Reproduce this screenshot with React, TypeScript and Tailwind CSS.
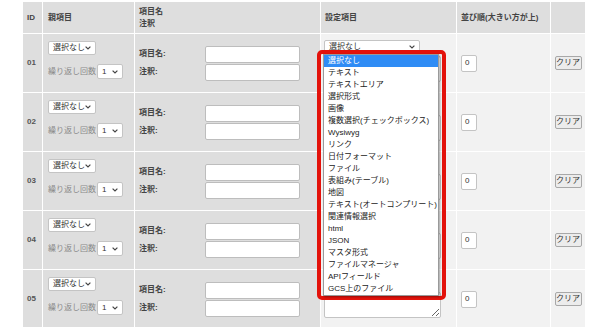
import React from "react";

function Chevron() {
  return (
    <svg width="6" height="4" viewBox="0 0 6 4" className="block">
      <path d="M0.6 0.6 L3 3 L5.4 0.6" fill="none" stroke="#444" strokeWidth="1.2" />
    </svg>
  );
}

function Sel({ w, h, text }: { w: string; h: string; text: string }) {
  return (
    <div
      className={`${w} ${h} flex items-center justify-between bg-white border border-[#c4c4c4] rounded-[2px] pl-[4px] pr-[4px] text-[#333] leading-none`}
    >
      <span>{text}</span>
      <Chevron />
    </div>
  );
}

const items = [
  "選択なし",
  "テキスト",
  "テキストエリア",
  "選択形式",
  "画像",
  "複数選択(チェックボックス)",
  "Wysiwyg",
  "リンク",
  "日付フォーマット",
  "ファイル",
  "表組み(テーブル)",
  "地図",
  "テキスト(オートコンプリート)",
  "関連情報選択",
  "html",
  "JSON",
  "マスタ形式",
  "ファイルマネージャ",
  "APIフィールド",
  "GCS上のファイル",
];

const ids = ["01", "02", "03", "04", "05"];

export default function App() {
  return (
    <div className="relative w-[600px] h-[327px] overflow-hidden bg-white font-['Liberation_Sans','Noto_Sans_CJK_JP',sans-serif] text-[8px]">
      <table className="ml-[22px] mt-[1px] w-[564px] table-fixed border-separate border-spacing-[1px] bg-white">
        <colgroup>
          <col className="w-[19px]" />
          <col className="w-[91px]" />
          <col className="w-[185px]" />
          <col className="w-[135px]" />
          <col className="w-[93px]" />
          <col className="w-[34px]" />
        </colgroup>
        <thead>
          <tr className="h-[31px]">
            <th className="bg-[#dedede] text-left align-middle pl-[4px] font-bold text-[#444]">ID</th>
            <th className="bg-[#dedede] text-left align-middle pl-[5px] font-bold text-[#444]">親項目</th>
            <th className="bg-[#dedede] text-left align-middle pl-[4px] font-bold text-[#444] leading-[12px]">
              項目名
              <br />
              注釈
            </th>
            <th className="bg-[#dedede] text-left align-middle pl-[4px] font-bold text-[#444]">設定項目</th>
            <th className="bg-[#dedede] text-left align-middle pl-[4px] font-bold text-[#444]">並び順(大きい方が上)</th>
            <th className="bg-[#dedede]"></th>
          </tr>
        </thead>
        <tbody>
          {ids.map((id, idx) => (
            <tr key={id} className="h-[58px]">
              <td className="bg-[#dedede] align-middle pl-[4px] font-bold text-[#555]">{id}</td>
              <td className="bg-[#dedede] align-top pt-[7px] pl-[5px]">
                <Sel w="w-[48px]" h="h-[14px]" text="選択なし" />
                <div className="mt-[9px] flex items-center gap-[1px]">
                  <span className="text-[#8a8a8a] w-[48px] whitespace-nowrap">繰り返し回数</span>
                  <Sel w="w-[26px]" h="h-[15px]" text="1" />
                </div>
              </td>
              <td className="bg-[#dedede] align-middle pl-[4px]">
                <div className="grid grid-cols-[66px_95px] gap-y-[1px] items-center">
                  <span className="font-bold text-[#444]">項目名:</span>
                  <div className="h-[17px] bg-white border border-[#bdbdbd] rounded-[2px]" />
                  <span className="font-bold text-[#444]">注釈:</span>
                  <div className="h-[17px] bg-white border border-[#bdbdbd] rounded-[2px]" />
                </div>
              </td>
              <td className="bg-[#f2f2f2] align-top pt-[6px] pl-[3px]">
                <Sel w="w-[96px]" h="h-[14px]" text={idx === 0 ? "選択なし" : ""} />
                <textarea
                  readOnly
                  className="block mt-[2px] w-[117px] h-[26px] bg-white border border-[#c4c4c4] rounded-[2px] resize-y"
                />
              </td>
              <td className="bg-[#f2f2f2] align-middle pl-[4px]">
                <div className="w-[16px] h-[17px] bg-white border border-[#c4c4c4] rounded-[2px] flex items-center pl-[3px] text-[#333] leading-none">
                  0
                </div>
              </td>
              <td className="bg-[#f2f2f2] align-middle">
                <div className="mx-auto w-[27px] h-[14px] flex items-center justify-center bg-[#ececec] border border-[#a8a8a8] rounded-[2px] text-[#333] leading-none whitespace-nowrap">
                  クリア
                </div>
              </td>
            </tr>
          ))}
        </tbody>
      </table>

      <div className="absolute left-[317px] top-[50px] w-[129px] h-[250px] border-[4px] border-[#e3120b] rounded-[5px]">
        <div className="ml-[2px] w-[116px] h-[242px] bg-white border border-[#9a9a9a] shadow-[1px_1px_2px_rgba(0,0,0,0.35)]">
          {items.map((it, i) => (
            <div
              key={it}
              className={`h-[12px] leading-[12px] pl-[4px] whitespace-nowrap ${
                i === 0 ? "bg-[#2f8cf5] text-white" : "text-[#222]"
              }`}
            >
              {it}
            </div>
          ))}
        </div>
      </div>
    </div>
  );
}
